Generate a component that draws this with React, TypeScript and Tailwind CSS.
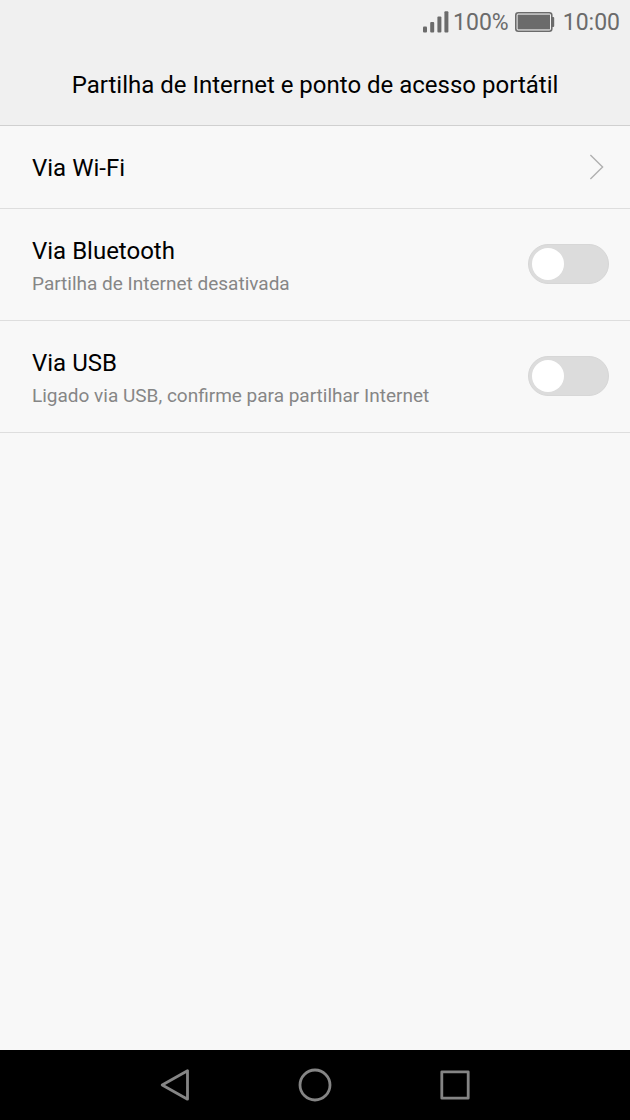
import { useState } from 'react';

interface ToggleRowProps {
  id: string;
  title: string;
  summary: string;
}

function SignalIcon() {
  return (
    <svg width="26" height="22" viewBox="0 0 26 22" fill="#6b6b6b" aria-hidden="true">
      <rect x="0" y="15.5" width="4" height="6" rx="1" />
      <rect x="7.2" y="11" width="4" height="10.5" rx="1" />
      <rect x="14.4" y="5.5" width="4" height="16" rx="1" />
      <rect x="21.4" y="0.3" width="4" height="21.2" rx="1" />
    </svg>
  );
}

function BatteryIcon() {
  return (
    <svg width="40" height="20" viewBox="0 0 40 20" aria-hidden="true">
      <rect x="0.8" y="0.8" width="36" height="18.4" rx="2.5" fill="none" stroke="#6b6b6b" strokeWidth="1.6" />
      <rect x="2.6" y="2.6" width="32.4" height="14.8" fill="#6b6b6b" />
      <path d="M37 5h1.2a1 1 0 0 1 1 1v8a1 1 0 0 1-1 1H37z" fill="#6b6b6b" />
    </svg>
  );
}

function StatusBar() {
  return (
    <div className="flex h-11 items-center justify-end pr-2.5 text-[23px] leading-7 text-[#6b6b6b]">
      <SignalIcon />
      <span className="ml-1 pt-0.5">100%</span>
      <span className="mr-2 ml-1.5">
        <BatteryIcon />
      </span>
      <span className="pt-0.5">10:00</span>
    </div>
  );
}

function ToggleRow({ id, title, summary }: ToggleRowProps) {
  const [on, setOn] = useState(false);

  return (
    <li className="border-b border-[#dedede]">
      <label htmlFor={id} className="flex h-[111px] items-center justify-between pr-[21px] pb-px pl-8">
        <span className="flex flex-col gap-[3px] pt-[5px]">
          <span className="text-2xl leading-8 text-black">{title}</span>
          <span className="text-[19px] leading-7 text-[#868686]">{summary}</span>
        </span>
        <input
          id={id}
          type="checkbox"
          role="switch"
          checked={on}
          onChange={(e) => setOn(e.target.checked)}
          className="flex h-10 w-[81px] shrink-0 appearance-none items-center rounded-full border border-[#d7d7d7] bg-[#dcdcdc] px-[3px]
            before:size-8 before:rounded-full before:bg-white checked:justify-end checked:bg-[#1aa7b5]"
        />
      </label>
    </li>
  );
}

export default function App() {
  return (
    <div className="flex min-h-screen flex-col bg-[#f8f8f8] font-['Roboto',sans-serif]">
      <header className="border-b border-[#d0d0d0] bg-[#f0f0f0]">
        <StatusBar />
        <h1 className="h-[81px] pt-[25px] text-center text-2xl leading-8 text-black">
          Partilha de Internet e ponto de acesso portátil
        </h1>
      </header>

      <main className="flex-1">
        <ul>
          <li className="border-b border-[#dedede]">
            <button type="button" className="flex h-[82px] w-full items-center justify-between pr-6 pl-8 text-left">
              <span className="pt-0.5 text-2xl leading-8 text-black">Via Wi-Fi</span>
              <svg width="18" height="26" viewBox="0 0 18 26" fill="none" stroke="#b0b0b0" strokeWidth="1.4" aria-hidden="true">
                <path d="M2.4 1l12.2 12L2.4 25" />
              </svg>
            </button>
          </li>
          <ToggleRow id="bluetooth" title="Via Bluetooth" summary="Partilha de Internet desativada" />
          <ToggleRow id="usb" title="Via USB" summary="Ligado via USB, confirme para partilhar Internet" />
        </ul>
      </main>

      {/* System navigation */}
      <nav className="flex h-[70px] items-center justify-center gap-[100px] bg-black">
        <button type="button" aria-label="Back">
          <svg width="40" height="40" viewBox="0 0 40 40" fill="none" stroke="#858585" strokeWidth="2.8" strokeLinejoin="round">
            <path d="M32.5 5.8v28.4L7.2 20z" />
          </svg>
        </button>
        <button type="button" aria-label="Home">
          <svg width="40" height="40" viewBox="0 0 40 40" fill="none" stroke="#858585" strokeWidth="2.8">
            <circle cx="20" cy="20" r="15" />
          </svg>
        </button>
        <button type="button" aria-label="Recent apps">
          <svg width="40" height="40" viewBox="0 0 40 40" fill="none" stroke="#858585" strokeWidth="2.8" strokeLinejoin="round">
            <rect x="6.8" y="6.8" width="26.4" height="26.4" />
          </svg>
        </button>
      </nav>
    </div>
  );
}
